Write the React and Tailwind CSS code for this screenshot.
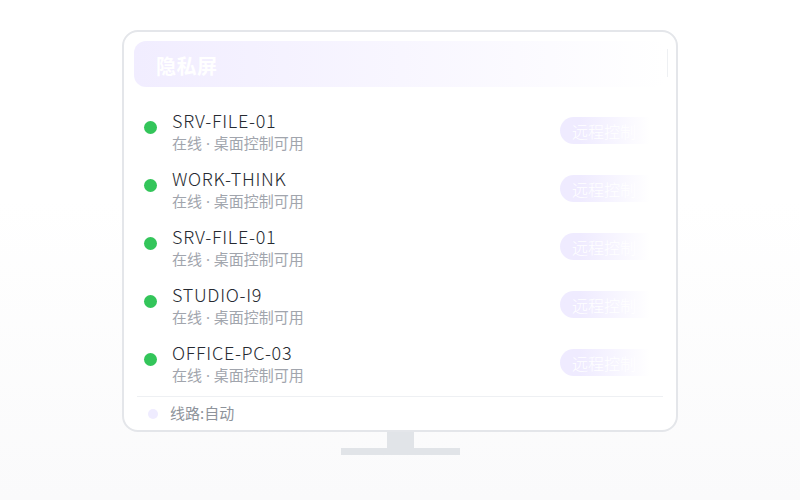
import React from "react";

const rows = [
  "SRV-FILE-01",
  "WORK-THINK",
  "SRV-FILE-01",
  "STUDIO-I9",
  "OFFICE-PC-03",
];

export default function App() {
  return (
    <div
      className="w-[800px] h-[500px] overflow-hidden bg-gradient-to-b from-white from-40% to-[#fafafb] pt-[30px]"
      style={{ fontFamily: '"Noto Sans CJK SC", sans-serif' }}
    >
      <div className="mx-auto w-[556px] flex flex-col items-center">
        <div className="w-full h-[402px] rounded-[16px] border-2 border-[#e4e6ea] bg-white px-[10px] pt-[9px] flex flex-col overflow-hidden">
          <div className="h-[46px] rounded-[12px] bg-gradient-to-r from-[#f1edff] via-[#f8f6ff] to-white flex items-center pl-[22px] relative">
            <span className="text-white text-[20px] font-bold tracking-[0.5px] mt-[3px]">隐私屏</span>
            <div className="absolute right-[-2px] top-[8px] w-px h-[28px] bg-[#eef0f3]" />
          </div>
          <div className="flex flex-col pt-[17px]">
            {rows.map((name, i) => (
              <div key={i} className="h-[58px] flex items-start relative">
                <div className="w-[13px] h-[13px] rounded-full bg-[#33c55a] mt-[17px] ml-[10px]" />
                <div className="ml-[15px] flex flex-col pt-[4px]">
                  <span className="text-[18px] leading-[24px] font-light text-[#262a31] tracking-[0.7px]">{name}</span>
                  <span
                    className="text-[15px] leading-[20px] text-[#a1a5ad] mt-[1px]"
                    style={{ fontFamily: '"Noto Sans", "Noto Sans CJK SC", sans-serif' }}
                  >
                    在线 · 桌面控制可用
                  </span>
                </div>
                <div className="absolute left-[426px] top-[13px] w-[100px] h-[27px] rounded-full bg-gradient-to-r from-[#efebff] from-20% to-white to-90% flex items-center pl-[12px]">
                  <span className="text-white text-[16px] font-light leading-none whitespace-nowrap">远程控制</span>
                </div>
              </div>
            ))}
          </div>
          <div className="mt-[2px] mx-[3px] border-t border-[#eef0f3] flex items-center h-[34px]">
            <div className="w-[10px] h-[10px] rounded-full bg-[#efecff] ml-[11px]" />
            <span className="ml-[12px] text-[15px] text-[#8e939b]">线路:自动</span>
          </div>
        </div>
        <div className="w-[27px] h-[16px] bg-[#e1e4e8]" />
        <div className="w-[119px] h-[7px] bg-[#e1e4e8]" />
      </div>
    </div>
  );
}
